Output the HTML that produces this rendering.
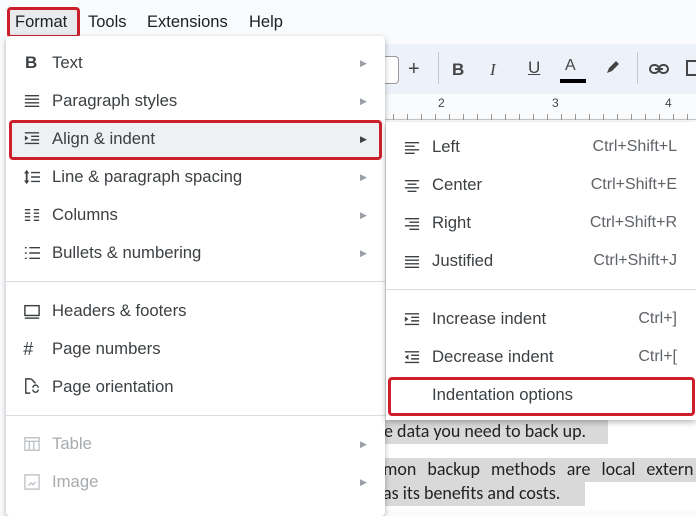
<!DOCTYPE html>
<html><head><meta charset="utf-8"><style>
*{margin:0;padding:0;box-sizing:border-box}
body{width:696px;height:510px;overflow:hidden;background:#f9fbfd;position:relative;font-family:"Liberation Sans",Arial,sans-serif;color:#3c4043}
.abs{position:absolute}
.menubar span{position:absolute;top:13px;font-size:16.5px;color:#202124}
.tb{position:absolute;left:380px;top:44px;width:316px;height:50px;background:#edf2fa}
.ruler{position:absolute;left:380px;top:94px;width:316px;height:26px;background:#f9fbfd;border-bottom:1px solid #c7c7c7}
.doc{position:absolute;left:380px;top:120px;width:316px;height:390px;background:#fff}
.menu{position:absolute;left:6px;top:36px;width:379px;height:480px;background:#fff;box-shadow:0 2px 6px rgba(0,0,0,.3);border-radius:4px}
.sub{position:absolute;left:386px;top:122px;width:310px;height:298px;background:#fff;box-shadow:0 2px 6px rgba(0,0,0,.3)}
.it{position:absolute;font-size:16.7px;color:#3c4043;line-height:20px}
.ic{position:absolute;width:16px;height:16px}
.arr{position:absolute;left:354px;font-size:9px;color:#9aa0a6}
.sc{position:absolute;right:19px;font-size:16px;color:#5f6368;line-height:20px}
.sep{position:absolute;height:1px;background:#dadce0}
.hl{position:absolute;background:#d9d9d9;font-family:"Carlito","Liberation Sans",sans-serif;font-size:18px;color:#222;line-height:22px;white-space:nowrap}
.box{position:absolute;border:3px solid #cc1f2b;border-radius:4px}
</style></head><body>
<div class="menubar">
<div class="abs" style="left:10px;top:8px;width:67px;height:28px;background:#e8eaed;border-radius:3px"></div>
<span style="left:15px">Format</span><span style="left:88px">Tools</span><span style="left:147px">Extensions</span><span style="left:249px">Help</span>
</div>
<div class="box" style="left:7px;top:7px;width:73px;height:31px"></div>
<div class="tb">
<div class="abs" style="left:0;top:12px;width:19px;height:28px;border:1px solid #999;border-left:none;border-radius:0 4px 4px 0;background:#fff"></div>
<div class="abs" style="left:28px;top:14px;font-size:20px;color:#444">+</div>
<div class="abs" style="left:58px;top:8px;width:1px;height:32px;background:#c7c7c7"></div>
<div class="abs" style="left:72px;top:16px;font-size:17px;font-weight:bold;color:#444">B</div>
<div class="abs" style="left:110px;top:16px;font-size:17px;font-style:italic;color:#444;font-family:'Liberation Serif',serif">I</div>
<div class="abs" style="left:148px;top:14px;font-size:17px;color:#444;text-decoration:underline">U</div>
<div class="abs" style="left:185px;top:13px;font-size:16px;color:#444">A</div>
<div class="abs" style="left:180px;top:35px;width:26px;height:4px;background:#000"></div>
<svg class="abs" style="left:224px;top:14px" width="18" height="18" viewBox="0 0 18 18"><path d="M3 15l2-5 7-7 3 3-7 7z" fill="#444"/></svg>
<div class="abs" style="left:257px;top:8px;width:1px;height:32px;background:#c7c7c7"></div>
<svg class="abs" style="left:268px;top:18px" width="22" height="14" viewBox="0 0 22 14"><rect x="2" y="3" width="9" height="8" rx="4" fill="none" stroke="#444" stroke-width="2"/><rect x="11" y="3" width="9" height="8" rx="4" fill="none" stroke="#444" stroke-width="2"/><rect x="7" y="6" width="8" height="2" fill="#444"/></svg>
<div class="abs" style="left:306px;top:16px;width:12px;height:16px;border:2px solid #444;border-right:none"></div>
</div>
<div class="ruler">
<div class="abs" style="left:58px;top:2px;font-size:12px;color:#444">2</div>
<div class="abs" style="left:172px;top:2px;font-size:12px;color:#444">3</div>
<div class="abs" style="left:285px;top:2px;font-size:12px;color:#444">4</div>
<div class="abs" style="left:0;top:20px;width:316px;height:6px;background:repeating-linear-gradient(90deg,transparent 0 13px,#999 13px 14px)"></div>
</div>
<div class="doc">
<div class="hl" style="left:3px;top:300px;width:225px;height:24px;padding-left:1px">e data you need to back up.</div>
<div class="hl" style="left:3px;top:338px;width:313px;height:24px;word-spacing:7px">mon backup methods are local extern</div>
<div class="hl" style="left:3px;top:362px;width:202px;height:24px">as its benefits and costs.</div>
</div>

<div class="menu">
<div class="abs" style="left:6px;top:86px;width:368px;height:37px;background:#eef0f2"></div>
<div class="abs" style="left:19px;top:17px;font-size:17px;font-weight:bold;color:#3c4043">B</div>
<div class="it" style="left:46px;top:17px">Text</div><div class="arr" style="top:22px">▶</div>
<svg class="ic" style="left:18px;top:57px" viewBox="0 0 18 18"><path d="M1 3h16M1 7h16M1 11h16M1 15h16" stroke="#3c4043" stroke-width="1.6"/></svg>
<div class="it" style="left:46px;top:55px">Paragraph styles</div><div class="arr" style="top:60px">▶</div>
<svg class="ic" style="left:18px;top:95px" viewBox="0 0 18 18"><path d="M1 2h16M8 6h9M8 10h9M1 14h16" stroke="#3c4043" stroke-width="1.6"/><path d="M1 5l4 3-4 3z" fill="#3c4043"/></svg>
<div class="it" style="left:46px;top:93px">Align &amp; indent</div><div class="arr" style="top:98px;color:#3c4043">▶</div>
<svg class="ic" style="left:18px;top:133px" viewBox="0 0 18 18"><path d="M3 3v12" stroke="#3c4043" stroke-width="2"/><path d="M0 5l3-4 3 4zM0 13l3 4 3-4z" fill="#3c4043"/><path d="M8 4h10M8 9h10M8 14h10" stroke="#3c4043" stroke-width="1.6"/></svg>
<div class="it" style="left:46px;top:131px">Line &amp; paragraph spacing</div><div class="arr" style="top:136px">▶</div>
<svg class="ic" style="left:18px;top:171px" viewBox="0 0 18 18"><path d="M1 3h6M11 3h6M1 7h6M11 7h6M1 11h6M11 11h6M1 15h6M11 15h6" stroke="#3c4043" stroke-width="1.6"/></svg>
<div class="it" style="left:46px;top:169px">Columns</div><div class="arr" style="top:174px">▶</div>
<svg class="ic" style="left:18px;top:209px" viewBox="0 0 18 18"><path d="M1 3h2M1 9h2M1 15h2M6 3h12M6 9h12M6 15h12" stroke="#3c4043" stroke-width="1.6"/></svg>
<div class="it" style="left:46px;top:207px">Bullets &amp; numbering</div><div class="arr" style="top:212px">▶</div>
<div class="sep" style="left:0;top:245px;width:379px"></div>
<svg class="ic" style="left:18px;top:267px" viewBox="0 0 18 18"><rect x="1" y="3" width="16" height="11" fill="none" stroke="#3c4043" stroke-width="1.6"/><path d="M1 17h16" stroke="#3c4043" stroke-width="1.6"/></svg>
<div class="it" style="left:46px;top:265px">Headers &amp; footers</div>
<div class="abs" style="left:17px;top:303px;font-size:18px;font-style:italic;color:#3c4043">#</div>
<div class="it" style="left:46px;top:303px">Page numbers</div>
<svg class="ic" style="left:18px;top:342px" viewBox="0 0 18 18"><path d="M8 1H2v16h5M8 1l5 5" fill="none" stroke="#3c4043" stroke-width="1.6"/><path d="M10 11a3 3 0 0 1 6 0M16 13a3 3 0 0 1-6 0" fill="none" stroke="#3c4043" stroke-width="1.6"/></svg>
<div class="it" style="left:46px;top:341px">Page orientation</div>
<div class="sep" style="left:0;top:379px;width:379px"></div>
<svg class="ic" style="left:18px;top:400px" viewBox="0 0 18 18"><rect x="1" y="2" width="16" height="14" fill="none" stroke="#bdc1c6" stroke-width="1.5"/><path d="M1 6h16M6 6v10M11 6v10" stroke="#bdc1c6" stroke-width="1.5"/></svg>
<div class="it" style="left:46px;top:398px;color:#a8abae">Table</div><div class="arr" style="top:403px">▶</div>
<svg class="ic" style="left:18px;top:438px" viewBox="0 0 18 18"><rect x="1" y="1" width="16" height="16" fill="none" stroke="#bdc1c6" stroke-width="1.5"/><path d="M5 13l3-3 2 2 3-3" stroke="#bdc1c6" stroke-width="1.5" fill="none"/></svg>
<div class="it" style="left:46px;top:436px;color:#a8abae">Image</div><div class="arr" style="top:441px">▶</div>
</div>
<div class="box" style="left:9px;top:120px;width:373px;height:40px"></div>

<div class="sub">
<svg class="ic" style="left:18px;top:18px" viewBox="0 0 18 18"><path d="M1 3h16M1 7h11M1 11h16M1 15h11" stroke="#3c4043" stroke-width="1.6"/></svg>
<div class="it" style="left:46px;top:15px">Left</div><div class="sc" style="top:15px">Ctrl+Shift+L</div>
<svg class="ic" style="left:18px;top:56px" viewBox="0 0 18 18"><path d="M1 3h16M4 7h10M1 11h16M4 15h10" stroke="#3c4043" stroke-width="1.6"/></svg>
<div class="it" style="left:46px;top:53px">Center</div><div class="sc" style="top:53px">Ctrl+Shift+E</div>
<svg class="ic" style="left:18px;top:94px" viewBox="0 0 18 18"><path d="M1 3h16M6 7h11M1 11h16M6 15h11" stroke="#3c4043" stroke-width="1.6"/></svg>
<div class="it" style="left:46px;top:91px">Right</div><div class="sc" style="top:91px">Ctrl+Shift+R</div>
<svg class="ic" style="left:18px;top:132px" viewBox="0 0 18 18"><path d="M1 3h16M1 7h16M1 11h16M1 15h16" stroke="#3c4043" stroke-width="1.6"/></svg>
<div class="it" style="left:46px;top:129px">Justified</div><div class="sc" style="top:129px">Ctrl+Shift+J</div>
<div class="sep" style="left:0;top:167px;width:310px"></div>
<svg class="ic" style="left:18px;top:190px" viewBox="0 0 18 18"><path d="M1 2h16M8 6h9M8 10h9M1 14h16" stroke="#3c4043" stroke-width="1.6"/><path d="M1 5l4 3-4 3z" fill="#3c4043"/></svg>
<div class="it" style="left:46px;top:187px">Increase indent</div><div class="sc" style="top:187px">Ctrl+]</div>
<svg class="ic" style="left:18px;top:228px" viewBox="0 0 18 18"><path d="M1 2h16M8 6h9M8 10h9M1 14h16" stroke="#3c4043" stroke-width="1.6"/><path d="M5 5l-4 3 4 3z" fill="#3c4043"/></svg>
<div class="it" style="left:46px;top:225px">Decrease indent</div><div class="sc" style="top:225px">Ctrl+[</div>
<div class="it" style="left:46px;top:263px">Indentation options</div>
</div>
<div class="box" style="left:388px;top:377px;width:307px;height:39px"></div>
</body></html>
